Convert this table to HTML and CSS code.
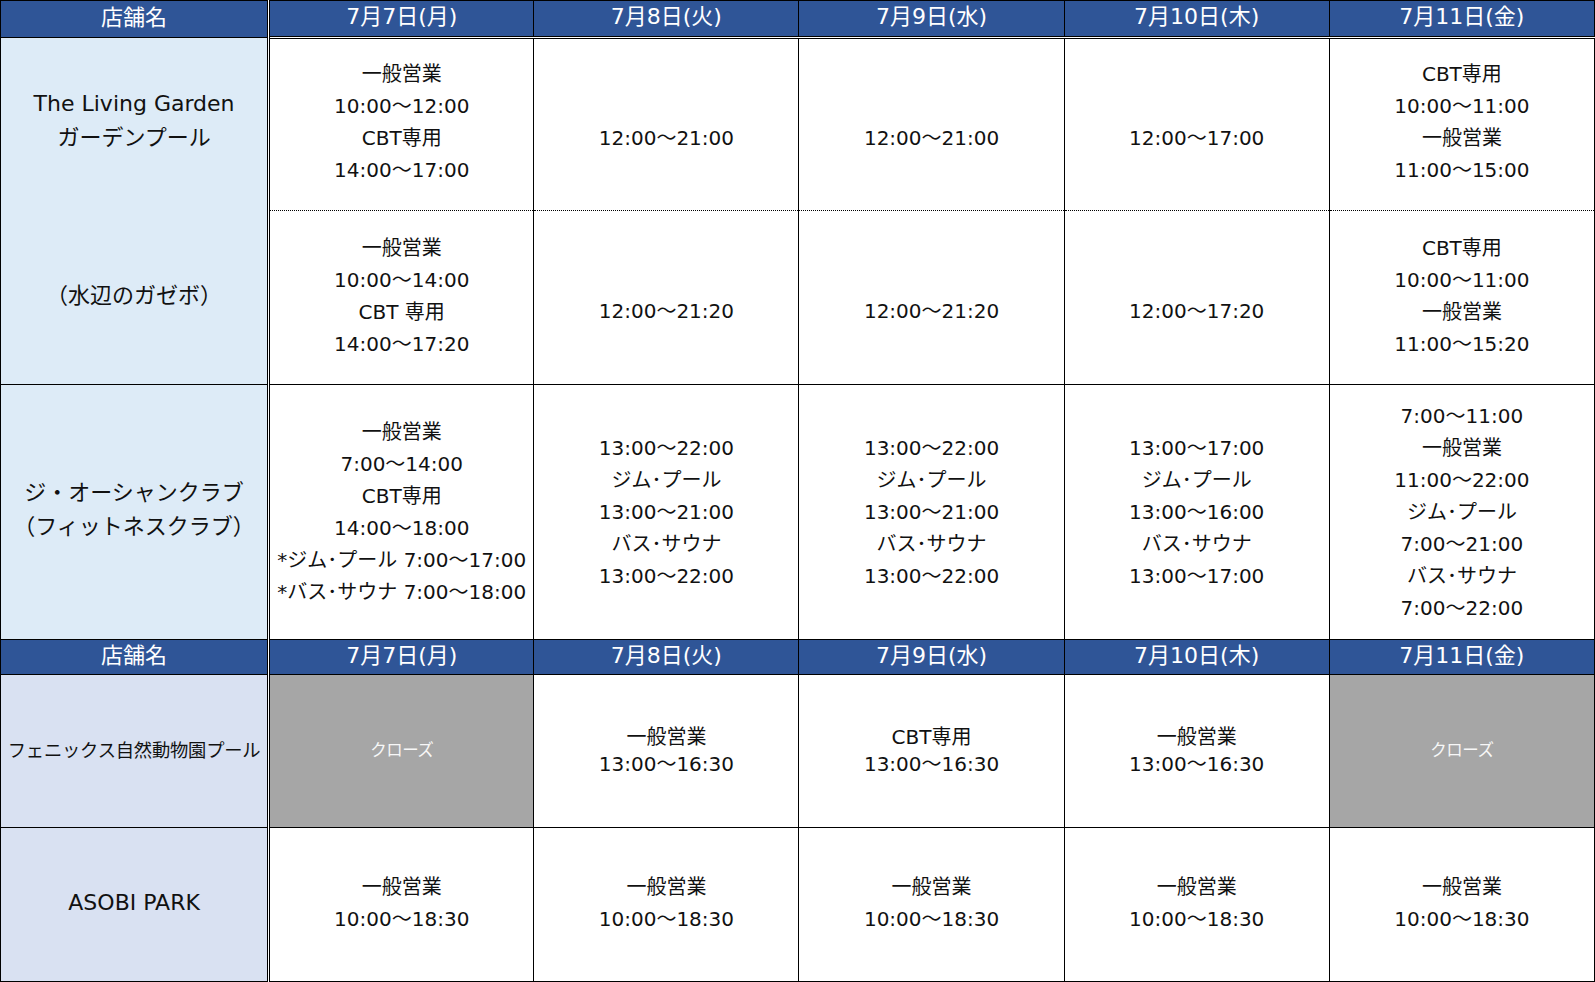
FILE: index.html
```html
<!DOCTYPE html>
<html lang="ja">
<head>
<meta charset="utf-8">
<title>営業スケジュール</title>
<link rel="stylesheet" href="styles.css">
</head>
<body>
<table class="sched">
  <colgroup>
    <col class="c-name">
    <col class="c-day"><col class="c-day"><col class="c-day"><col class="c-day"><col class="c-day">
  </colgroup>
  <tr class="hdr h1">
    <th class="name">店舗名</th>
    <th>7月7日(月)</th><th>7月8日(火)</th><th>7月9日(水)</th><th>7月10日(木)</th><th>7月11日(金)</th>
  </tr>
  <tr class="r1a">
    <td class="name blue top-part">The Living Garden<br>ガーデンプール</td>
    <td class="first">一般営業<br>10:00～12:00<br>CBT専用<br>14:00～17:00</td>
    <td class="first single">12:00～21:00</td>
    <td class="first single">12:00～21:00</td>
    <td class="first single">12:00～17:00</td>
    <td class="first">CBT専用<br>10:00～11:00<br>一般営業<br>11:00～15:00</td>
  </tr>
  <tr class="r1b">
    <td class="name blue bottom-part">（水辺のガゼボ）</td>
    <td>一般営業<br>10:00～14:00<br>CBT 専用<br>14:00～17:20</td>
    <td class="single">12:00～21:20</td>
    <td class="single">12:00～21:20</td>
    <td class="single">12:00～17:20</td>
    <td>CBT専用<br>10:00～11:00<br>一般営業<br>11:00～15:20</td>
  </tr>
  <tr class="r2">
    <td class="name blue ocean">ジ・オーシャンクラブ<br>（フィットネスクラブ）</td>
    <td>一般営業<br>7:00～14:00<br>CBT専用<br>14:00～18:00<br>*ジム･プール 7:00～17:00<br>*バス･サウナ 7:00～18:00</td>
    <td>13:00～22:00<br>ジム･プール<br>13:00～21:00<br>バス･サウナ<br>13:00～22:00</td>
    <td>13:00～22:00<br>ジム･プール<br>13:00～21:00<br>バス･サウナ<br>13:00～22:00</td>
    <td>13:00～17:00<br>ジム･プール<br>13:00～16:00<br>バス･サウナ<br>13:00～17:00</td>
    <td>7:00～11:00<br>一般営業<br>11:00～22:00<br>ジム･プール<br>7:00～21:00<br>バス･サウナ<br>7:00～22:00</td>
  </tr>
  <tr class="hdr h2">
    <th class="name">店舗名</th>
    <th>7月7日(月)</th><th>7月8日(火)</th><th>7月9日(水)</th><th>7月10日(木)</th><th>7月11日(金)</th>
  </tr>
  <tr class="r3">
    <td class="name lav small">フェニックス自然動物園プール</td>
    <td class="closed">クローズ</td>
    <td>一般営業<br>13:00～16:30</td>
    <td>CBT専用<br>13:00～16:30</td>
    <td>一般営業<br>13:00～16:30</td>
    <td class="closed">クローズ</td>
  </tr>
  <tr class="r4">
    <td class="name lav">ASOBI PARK</td>
    <td>一般営業<br>10:00～18:30</td>
    <td>一般営業<br>10:00～18:30</td>
    <td>一般営業<br>10:00～18:30</td>
    <td>一般営業<br>10:00～18:30</td>
    <td>一般営業<br>10:00～18:30</td>
  </tr>
</table>
</body>
</html>
```

FILE: styles.css
```css
html, body {
  margin: 0;
  padding: 0;
  background: #ffffff;
}

.sched {
  width: 1595px;
  border-collapse: collapse;
  table-layout: fixed;
  font-family: "DejaVu Sans", "Noto Sans CJK JP", sans-serif;
  font-size: 20px;
  color: #111;
}

.c-name { width: 268px; }
.c-day { width: 265px; }

.sched th,
.sched td {
  border: 1px solid #000;
  padding: 0;
  text-align: center;
  vertical-align: middle;
  line-height: 32px;
  font-weight: normal;
  white-space: nowrap;
  overflow: hidden;
}

.sched .name {
  border-right: 3px double #000;
  font-size: 22px;
  line-height: 34px;
}

.hdr th,
.hdr th.name {
  background: #2f5597;
  color: #ffffff;
  font-size: 22px;
  line-height: 30px;
  padding-bottom: 3px;
}

.h1 { height: 37px; }
.h2 { height: 35px; }
.r1a { height: 173px; }
.r1b { height: 174px; }
.r2 { height: 255px; }
.r3 { height: 153px; }
.r4 { height: 154px; }

.r1a td {
  border-bottom: 1px dotted #000;
  padding-bottom: 6px;
}

.r1a td.first {
  border-top: 3px double #000;
}

.r1b td {
  border-top: 1px dotted #000;
  padding-bottom: 4px;
}

.sched td.single {
  padding-top: 26px;
  padding-bottom: 0;
}

.r1a td.top-part {
  border-bottom: hidden;
  padding-bottom: 6px;
}

.r1b td.bottom-part {
  border-top: hidden;
  padding-bottom: 2px;
}

.sched td.ocean {
  padding-bottom: 4px;
}

.blue { background: #ddebf7; }
.lav { background: #d9e1f2; }

.r3 td {
  line-height: 27.5px;
}

.r4 td {
  padding-bottom: 4px;
}

.sched .small {
  font-size: 18.3px;
  letter-spacing: -0.2px;
}

.closed {
  background: #a6a6a6;
  color: #f7f7f7;
  font-size: 16.5px;
  letter-spacing: -0.5px;
}
```
